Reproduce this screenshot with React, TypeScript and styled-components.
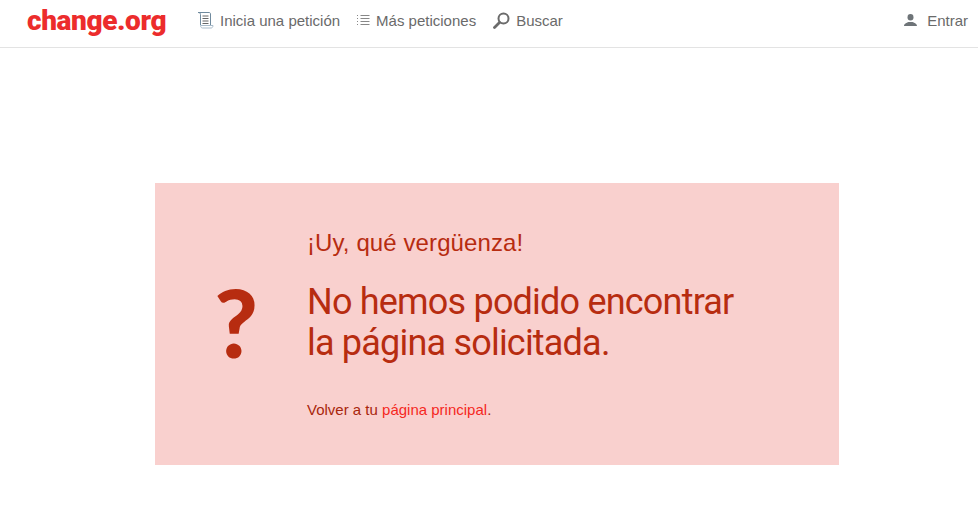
import { createGlobalStyle } from 'styled-components';
import styled from 'styled-components';

const GlobalStyle = createGlobalStyle`
	html, body {
		margin: 0;
		padding: 0;
		background: #fff;
		font-family: 'Liberation Sans', Arial, sans-serif;
	}
`;

const Header = styled.header`
	display: flex;
	align-items: flex-start;
	justify-content: space-between;
	height: 47px;
	padding: 0 10px 0 27px;
	border-bottom: 1px solid #e3e3e3;
`;
const Left = styled.div`
	display: flex;
	align-items: flex-start;
`;
const Logo = styled.div`
	font-family: Roboto, sans-serif;
	font-weight: 900;
	font-size: 28px;
	line-height: 42px;
	letter-spacing: -0.4px;
	color: #ec2c2c;
	width: 170px;
	white-space: nowrap;
`;
const Nav = styled.nav`
	display: flex;
	align-items: center;
	gap: 17px;
	height: 40px;
`;
const NavItem = styled.a`
	display: flex;
	align-items: center;
	gap: 6px;
	height: 40px;
	font-size: 15px;
	color: #6a6a6a;
`;
const UserLabel = styled.span`
	margin-left: 4px;
`;
const Main = styled.main`
	display: flex;
	justify-content: center;
	padding: 135px 0 0 16px;
`;
const Card = styled.section`
	display: flex;
	width: 684px;
	height: 282px;
	background: #f9d0ce;
	box-sizing: border-box;
	padding: 45px 0 0 0;
`;
const Mark = styled.div`
	width: 152px;
	display: flex;
	justify-content: center;
	padding: 44px 0 0 10px;
	font-family: Lato, sans-serif;
	font-weight: 900;
	font-size: 94px;
	line-height: 100px;
	color: #b72c10;
	box-sizing: border-box;
`;
const Body = styled.div`
	color: #b72c10;
`;
const Lead = styled.p`
	margin: 0;
	font-size: 24px;
	line-height: 30px;
	letter-spacing: 0.1px;
`;
const Title = styled.h1`
	margin: 24px 0 0;
	font-family: Roboto, sans-serif;
	font-weight: 400;
	font-size: 36px;
	line-height: 41px;
	letter-spacing: -0.8px;
`;
const Back = styled.p`
	margin: 36px 0 0;
	font-size: 15px;
	line-height: 20px;
	color: #a8260c;
`;
const Link = styled.a`
	color: #f5281e;
`;

const App = () => {
	return (
		<>
			<GlobalStyle />
			<Header>
				<Left>
					<Logo>change.org</Logo>
					<Nav>
						<NavItem>
							<svg width="17" height="18" viewBox="0 0 17 18" fill="none" stroke="#6f8a9e" strokeWidth="1">
								<path d="M1 1.500h11c1 0 1.500.6 1.500 1.500v11" />
								<path d="M1 1.500c1.500 0 2.500.5 2.500 2v10.500" />
								<path d="M5.500 5h6M5.500 7.500h6M5.500 10h6M5.500 12.500h6" stroke="#666" />
								<path d="M3.500 14.500h12.500c0 1.500-.8 2.500-2 2.500H5.500c-1 0-2-1-2-2.500z" stroke="#a9bccb" />
							</svg>
							Inicia una petición
						</NavItem>
						<NavItem>
							<svg width="13" height="12" viewBox="0 0 13 12" fill="none" stroke="#888" strokeWidth="1">
								<path d="M3.500 1.500h9M3.500 4.500h9M3.500 7.500h9M3.500 10.500h9" />
								<path d="M0 1.500h2M0 4.500h2M0 7.500h2M0 10.500h2" strokeDasharray="1 1" />
							</svg>
							Más peticiones
						</NavItem>
						<NavItem>
							<svg width="17" height="17" viewBox="0 0 17 17" fill="none" stroke="#6b6b6b">
								<circle cx="10.500" cy="6.500" r="5" strokeWidth="2" />
								<path d="M6.500 10.500L1.500 15.500" strokeWidth="2.800" strokeLinecap="round" />
							</svg>
							Buscar
						</NavItem>
					</Nav>
				</Left>
				<NavItem>
					<svg width="13" height="12" viewBox="0 0 13 12" fill="#6e7478">
						<ellipse cx="6.500" cy="3.200" rx="3" ry="3.200" />
						<path d="M0 12c0-2.500 2.500-3 4.500-4h4c2 1 4.500 1.500 4.500 4z" />
					</svg>
					<UserLabel>Entrar</UserLabel>
				</NavItem>
			</Header>
			<Main>
				<Card>
					<Mark>?</Mark>
					<Body>
						<Lead>¡Uy, qué vergüenza!</Lead>
						<Title>
							No hemos podido encontrar
							<br />
							la página solicitada.
						</Title>
						<Back>
							Volver a tu <Link>página principal</Link>.
						</Back>
					</Body>
				</Card>
			</Main>
		</>
	);
};

export default App;
